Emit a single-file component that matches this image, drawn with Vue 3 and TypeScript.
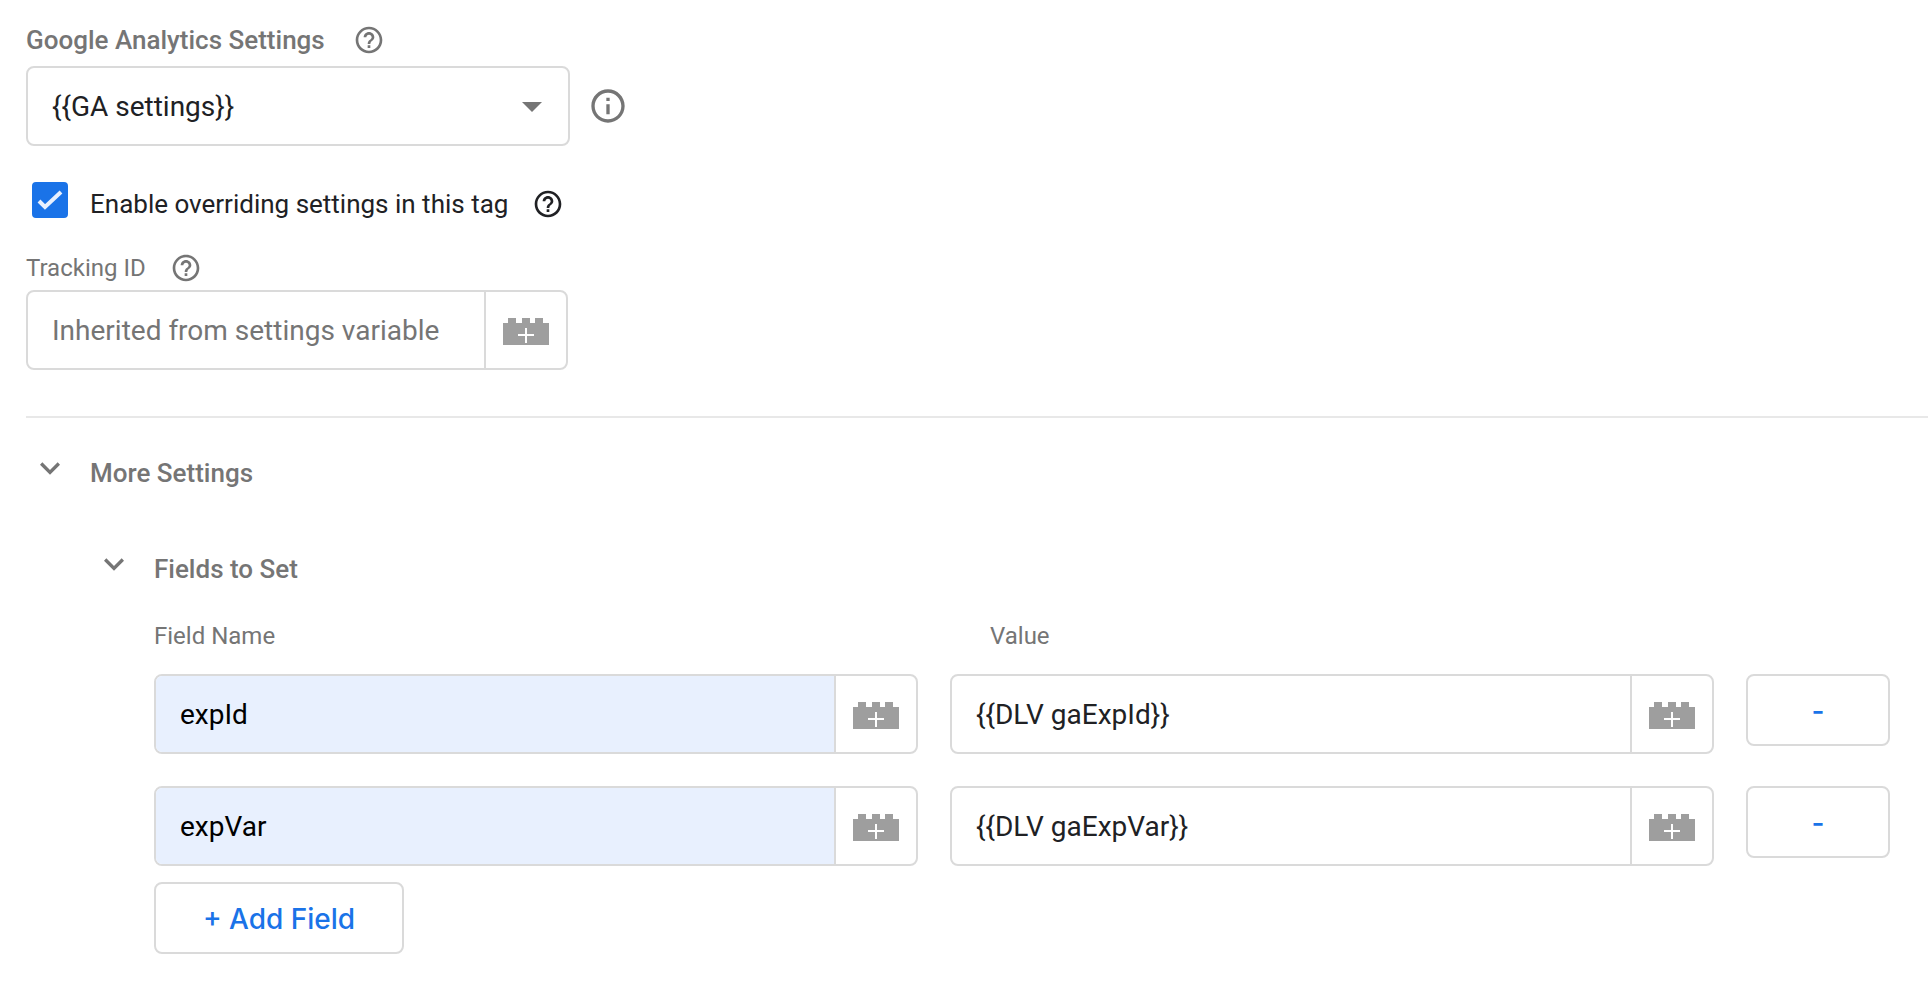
<script setup lang="ts">
import { ref } from 'vue'

interface FieldRow {
  id: number
  name: string
  value: string
}

const variables: string[] = ['{{GA settings}}']
const selected = ref(variables[0])
const overriding = ref(true)
const trackingId = ref('')
const moreOpen = ref(true)
const fieldsOpen = ref(true)
const rows = ref<FieldRow[]>([
  { id: 1, name: 'expId', value: '{{DLV gaExpId}}' },
  { id: 2, name: 'expVar', value: '{{DLV gaExpVar}}' },
])

const ring =
  'M12 2C6.48 2 2 6.48 2 12s4.48 10 10 10 10-4.48 10-10S17.52 2 12 2zm0 18c-4.41 0-8-3.59-8-8s3.59-8 8-8 8 3.59 8 8-3.59 8-8 8z'
const helpPath =
  ring + 'M11 18h2v-2h-2zM12 6c-2.21 0-4 1.79-4 4h2c0-1.1.9-2 2-2s2 .9 2 2c0 2-3 1.75-3 5h2c0-2.25 3-2.5 3-5 0-2.21-1.79-4-4-4z'
const infoPath = ring + 'M11 7h2v2h-2zM11 11h2v6h-2z'
const chevronPath = 'M7.41 8.59 12 13.17l4.59-4.58L18 10l-6 6-6-6z'
const brickPath =
  'M0 5h5V0h8v5h6V0h8v5h5V0h8v5h6v22H0zM22 10v6h-7v2h7v7h2v-7h7v-2h-7v-6z'

function addField(): void {
  const id = Math.max(0, ...rows.value.map((r) => r.id)) + 1
  rows.value.push({ id, name: '', value: '' })
}

function removeField(id: number): void {
  rows.value = rows.value.filter((r) => r.id !== id)
}
</script>

<template>
  <main class="settings">
    <div class="label-row title-label">
      <label class="heading" for="ga-settings">Google Analytics Settings</label>
      <button class="icon-button" type="button" aria-label="Help">
        <svg class="icon-small" viewBox="0 0 24 24"><path fill-rule="evenodd" :d="helpPath" /></svg>
      </button>
    </div>
    <div class="select-row">
      <div class="select-box">
        <select id="ga-settings" v-model="selected">
          <option v-for="v in variables" :key="v" :value="v">{{ v }}</option>
        </select>
        <svg class="arrow" viewBox="0 0 24 24"><path d="M7 10l5 5 5-5z" /></svg>
      </div>
      <button class="icon-button" type="button" aria-label="Variable details">
        <svg class="icon" viewBox="0 0 24 24"><path fill-rule="evenodd" :d="infoPath" /></svg>
      </button>
    </div>

    <div class="check-row">
      <span class="checkbox">
        <input id="override" v-model="overriding" type="checkbox" />
        <svg v-if="overriding" viewBox="0 0 36 36"><path d="M7 19l6 6 16-15" /></svg>
      </span>
      <div class="check-label">
        <label for="override">Enable overriding settings in this tag</label>
        <button class="icon-button dark" type="button" aria-label="Help">
          <svg class="icon-small" viewBox="0 0 24 24"><path fill-rule="evenodd" :d="helpPath" /></svg>
        </button>
      </div>
    </div>

    <div class="label-row tracking-label">
      <label class="caption" for="tracking-id">Tracking ID</label>
      <button class="icon-button" type="button" aria-label="Help">
        <svg class="icon-small" viewBox="0 0 24 24"><path fill-rule="evenodd" :d="helpPath" /></svg>
      </button>
    </div>
    <div class="field tracking">
      <input id="tracking-id" v-model="trackingId" type="text" placeholder="Inherited from settings variable" />
      <button type="button" aria-label="Insert variable">
        <svg class="brick" viewBox="0 0 46 27"><path fill-rule="evenodd" :d="brickPath" /></svg>
      </button>
    </div>

    <hr />

    <section class="more">
      <button class="toggle" type="button" :aria-expanded="moreOpen" @click="moreOpen = !moreOpen">
        <svg class="icon" viewBox="0 0 24 24"><path :d="chevronPath" /></svg>
        <span class="heading">More Settings</span>
      </button>
      <section v-if="moreOpen" class="nested">
        <button class="toggle" type="button" :aria-expanded="fieldsOpen" @click="fieldsOpen = !fieldsOpen">
          <svg class="icon" viewBox="0 0 24 24"><path :d="chevronPath" /></svg>
          <span class="heading">Fields to Set</span>
        </button>
        <div v-if="fieldsOpen" class="fields">
          <div class="grid captions">
            <span id="col-name" class="caption">Field Name</span>
            <span id="col-value" class="caption value-caption">Value</span>
          </div>
          <div class="rows">
            <div v-for="row in rows" :key="row.id" class="grid">
              <div class="field filled">
                <input v-model="row.name" type="text" aria-labelledby="col-name" />
                <button type="button" aria-label="Insert variable">
                  <svg class="brick" viewBox="0 0 46 27"><path fill-rule="evenodd" :d="brickPath" /></svg>
                </button>
              </div>
              <div class="field">
                <input v-model="row.value" type="text" aria-labelledby="col-value" />
                <button type="button" aria-label="Insert variable">
                  <svg class="brick" viewBox="0 0 46 27"><path fill-rule="evenodd" :d="brickPath" /></svg>
                </button>
              </div>
              <button class="outlined" type="button" @click="removeField(row.id)">-</button>
            </div>
          </div>
          <button class="outlined add" type="button" @click="addField">+ Add Field</button>
        </div>
      </section>
    </section>
  </main>
</template>

<style>
body {
  margin: 0;
  background: #fff;
}
</style>

<style scoped>
.settings {
  padding: 24px 0 32px 26px;
  font-family: Roboto, "Liberation Sans", sans-serif;
  font-size: 28px;
  color: #202124;
}
.settings *,
.settings {
  box-sizing: border-box;
}
button,
input,
select {
  margin: 0;
  padding: 0;
  border: 0;
  background: none;
  color: inherit;
  font: inherit;
}
button,
select,
label {
  cursor: pointer;
}
svg {
  display: block;
  flex: none;
  fill: currentColor;
}
.heading {
  font-size: 26px;
  font-weight: 500;
  color: #757575;
}
.caption {
  font-size: 24px;
  line-height: 32px;
  color: #757575;
}
.label-row {
  display: flex;
  align-items: center;
  gap: 24px;
  height: 32px;
}
.title-label {
  gap: 28px;
  margin-bottom: 10px;
}
.icon-button {
  color: #757575;
}
.icon-button.dark {
  color: #202124;
}
.icon-small {
  width: 32px;
  height: 32px;
}
.icon {
  width: 40px;
  height: 40px;
}
.select-row {
  display: flex;
  align-items: center;
  gap: 18px;
}
.select-box {
  display: grid;
  align-items: center;
  width: 544px;
  height: 80px;
}
.select-box > * {
  grid-area: 1 / 1;
}
select {
  width: 100%;
  height: 80px;
  padding: 0 64px 0 24px;
  border: 2px solid #dadada;
  border-radius: 8px;
  appearance: none;
}
.arrow {
  justify-self: end;
  width: 48px;
  height: 48px;
  margin-right: 14px;
  color: #757575;
  pointer-events: none;
}
.check-row {
  display: flex;
  gap: 22px;
  margin-top: 36px;
  padding-left: 6px;
  font-size: 26px;
}
.checkbox {
  display: grid;
  width: 36px;
  height: 36px;
}
.checkbox > * {
  grid-area: 1 / 1;
}
.checkbox input {
  width: 36px;
  height: 36px;
  border: 2px solid #757575;
  border-radius: 4px;
  appearance: none;
}
.checkbox input:checked {
  border-color: #1a73e8;
  background: #1a73e8;
}
.checkbox svg {
  fill: none;
  stroke: #e8f0fe;
  stroke-width: 4;
  pointer-events: none;
}
.check-label {
  display: flex;
  align-items: center;
  gap: 24px;
  height: 44px;
}
.tracking-label {
  margin: 26px 0 6px;
}
.field {
  display: flex;
  height: 80px;
  border: 2px solid #dadada;
  border-radius: 8px;
  overflow: hidden;
}
.tracking {
  width: 542px;
}
.field input {
  flex: 1;
  min-width: 0;
  padding: 0 24px;
}
.field input::placeholder {
  color: #757575;
  opacity: 1;
}
.filled input {
  background: #e8f0fe;
  color: #000;
}
.field button {
  display: grid;
  place-items: center;
  width: 82px;
  padding-top: 2px;
  border-left: 2px solid #dadada;
  color: #9e9e9e;
}
.brick {
  width: 46px;
  height: 27px;
}
hr {
  height: 2px;
  margin: 46px 0 30px;
  border: 0;
  background: #e8e8e8;
}
.more {
  padding-left: 4px;
}
.toggle {
  display: flex;
  gap: 20px;
  color: #757575;
  line-height: 50px;
}
.nested {
  margin-top: 46px;
  padding-left: 64px;
}
.fields {
  padding: 26px 38px 0 60px;
}
.grid {
  display: grid;
  grid-template-columns: 1fr 1fr 144px;
  align-items: start;
  gap: 32px;
}
.captions {
  margin-bottom: 22px;
}
.value-caption {
  padding-left: 40px;
}
.rows {
  display: grid;
  gap: 32px;
}
.outlined {
  height: 72px;
  padding-top: 2px;
  border: 2px solid #dadada;
  border-radius: 8px;
  color: #1a73e8;
  font-family: Inter, Roboto, sans-serif;
  font-weight: 500;
}
.add {
  min-width: 250px;
  margin-top: 16px;
}
</style>
